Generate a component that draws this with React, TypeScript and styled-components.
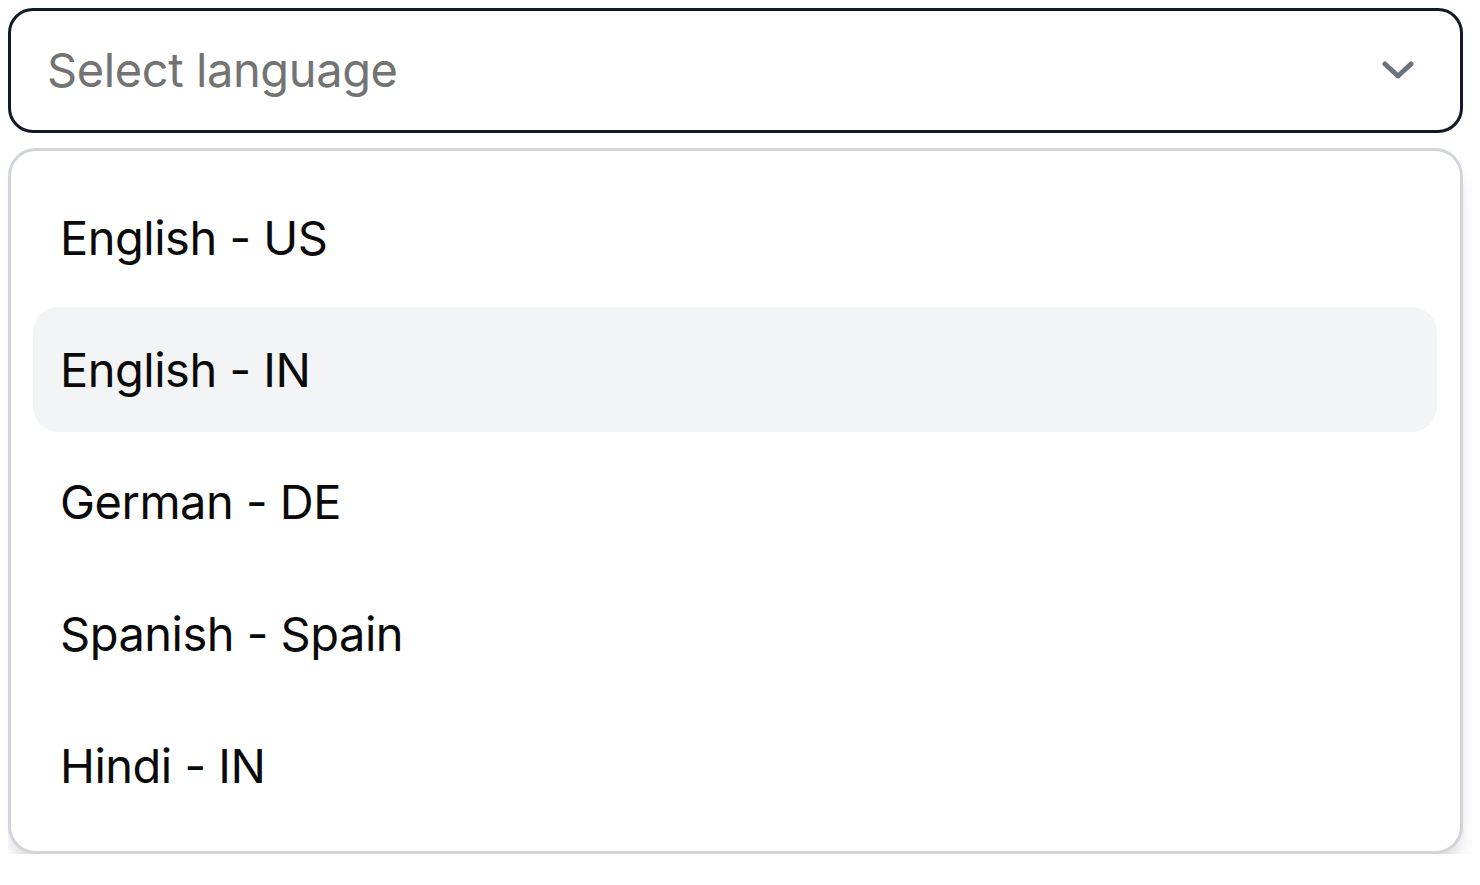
import React from "react";
import styled, { createGlobalStyle } from "styled-components";

const options = [
  "English - US",
  "English - IN",
  "German - DE",
  "Spanish - Spain",
  "Hindi - IN",
];

function App() {
  const active = 1;
  return (
    <React.Fragment>
      <GlobalStyle />
      <Wrapper>
        <Trigger type="button">
          <Placeholder>Select language</Placeholder>
          <Chevron viewBox="0 0 32 20" aria-hidden="true">
            <path d="M3 3 L16 15 L29 3" />
          </Chevron>
        </Trigger>
        <Menu>
          {options.map((label, index) => (
            <Option key={label} $active={index === active}>
              {label}
            </Option>
          ))}
        </Menu>
      </Wrapper>
    </React.Fragment>
  );
}

export default App;

const GlobalStyle = createGlobalStyle`
  body {
    margin: 8px;
    background: #ffffff;
    font-family: Inter, "Noto Sans", sans-serif;
  }
`;

const Wrapper = styled.div`
  width: 1455px;
  display: flex;
  flex-direction: column;
  gap: 15px;
`;

const Trigger = styled.button`
  height: 125px;
  box-sizing: border-box;
  display: flex;
  align-items: center;
  justify-content: space-between;
  padding: 0 46px 0 36px;
  background: #ffffff;
  border: 3px solid #111827;
  border-radius: 25px;
  font-family: inherit;
  cursor: pointer;
`;

const Placeholder = styled.span`
  font-size: 47px;
  letter-spacing: -0.4px;
  color: #737373;
  line-height: 1;
  margin-top: -2px;
`;

const Chevron = styled.svg`
  width: 32px;
  height: 20px;
  fill: none;
  stroke: #6b7280;
  stroke-width: 5;
  stroke-linecap: round;
  stroke-linejoin: round;
`;

const Menu = styled.div`
  box-sizing: border-box;
  display: flex;
  flex-direction: column;
  gap: 7px;
  padding: 24px 23px 23px 22px;
  border: 3px solid #d1d5db;
  border-radius: 28px;
  background: #ffffff;
  box-shadow: 0 18px 28px -8px rgba(0, 0, 0, 0.14),
    0 8px 12px -4px rgba(0, 0, 0, 0.08);
`;

const Option = styled.div<{ $active: boolean }>`
  height: 125px;
  display: flex;
  align-items: center;
  padding-left: 27px;
  border-radius: 25px;
  font-size: 47px;
  letter-spacing: -0.5px;
  color: #0a0a0a;
  background: ${(p) => (p.$active ? "#f3f4f6" : "transparent")};
`;
